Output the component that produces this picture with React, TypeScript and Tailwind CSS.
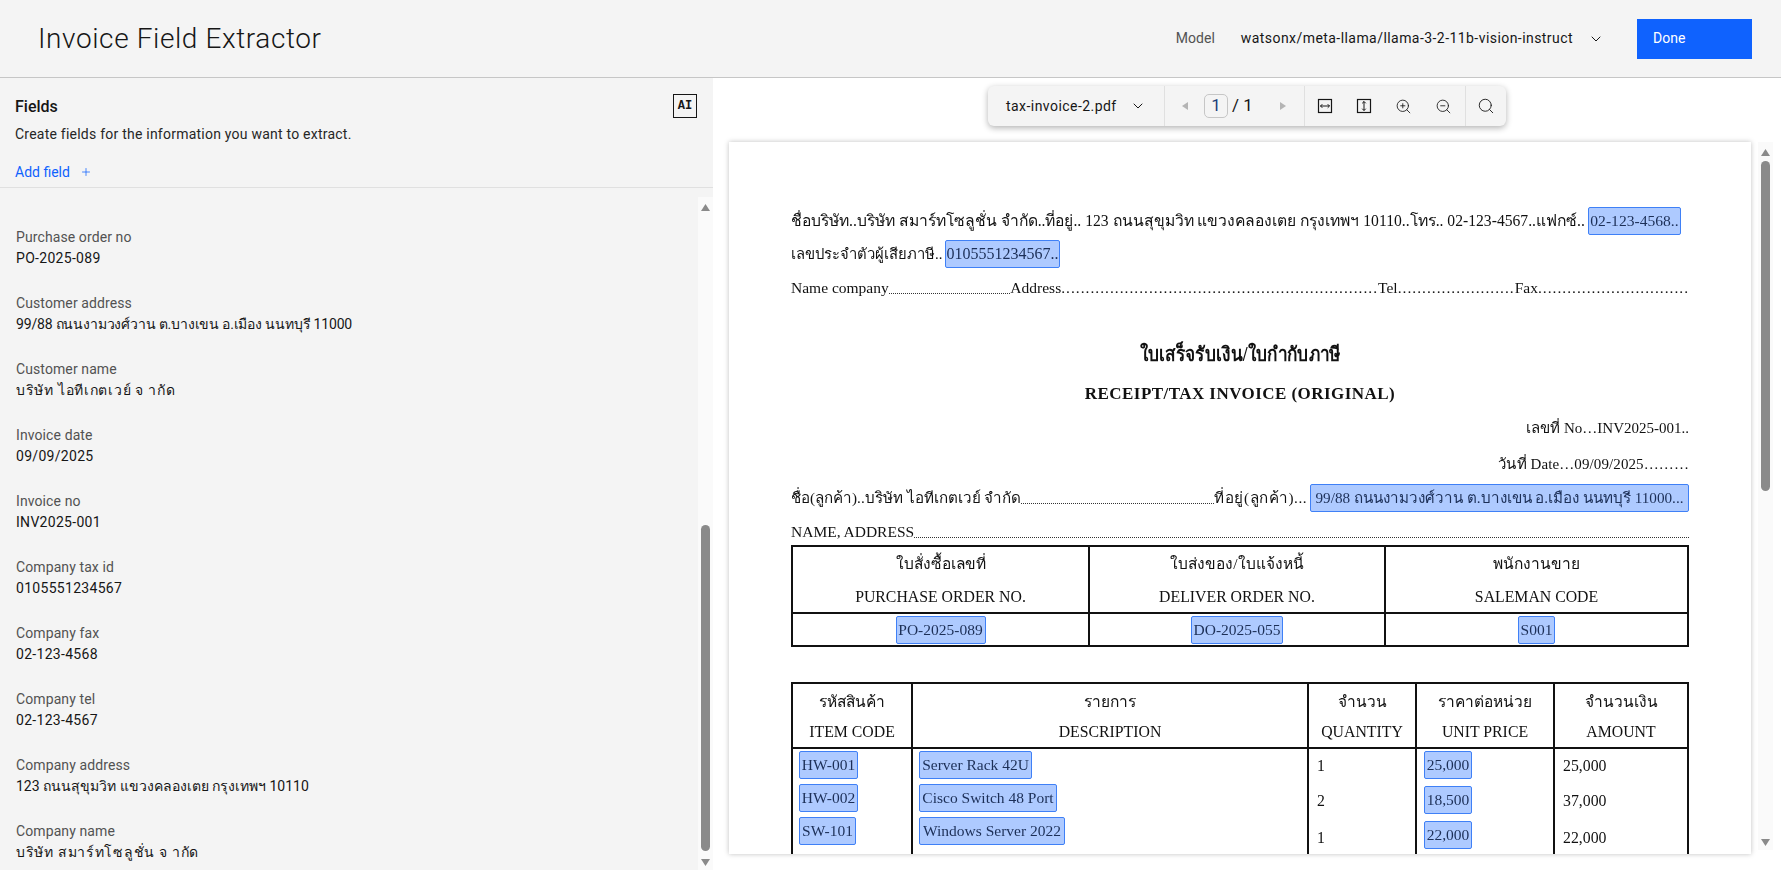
import React from "react";
import { ChevronDown, Plus, Search, ZoomIn, ZoomOut } from "lucide-react";

const fields = [
  { label: "Purchase order no", value: "PO-2025-089", spacing: "tracking-[0.3px]" },
  { label: "Customer address", value: "99/88 ถนนงามวงศ์วาน ต.บางเขน อ.เมือง นนทบุรี 11000", spacing: "tracking-[-0.18px]" },
  { label: "Customer name", value: "บริษัท ไอทีเกตเวย์ จ ากัด", spacing: "tracking-[0.7px]" },
  { label: "Invoice date", value: "09/09/2025", spacing: "tracking-[0.3px]" },
  { label: "Invoice no", value: "INV2025-001", spacing: "tracking-[0.3px]" },
  { label: "Company tax id", value: "0105551234567", spacing: "tracking-[0.3px]" },
  { label: "Company fax", value: "02-123-4568", spacing: "tracking-[0.3px]" },
  { label: "Company tel", value: "02-123-4567", spacing: "tracking-[0.3px]" },
  { label: "Company address", value: "123 ถนนสุขุมวิท แขวงคลองเตย กรุงเทพฯ 10110", spacing: "tracking-[0px]" },
  { label: "Company name", value: "บริษัท สมาร์ทโซลูชั่น จ ากัด", spacing: "tracking-[0.7px]" },
];

function Triangle({ dir, className }: { dir: "up" | "down" | "left" | "right"; className?: string }) {
  const points = {
    up: "5,1 10,9 0,9",
    down: "0,1 10,1 5,9",
    left: "8,1 8,9 2,5",
    right: "2,1 2,9 8,5",
  };
  return (
    <svg viewBox="0 0 10 10" className={className} fill="currentColor">
      <polygon points={points[dir]} />
    </svg>
  );
}

function Scrollbar({ before, thumb }: { before: string; thumb: string }) {
  return (
    <div className="flex h-full w-[15px] shrink-0 flex-col items-center bg-[#fafafa] text-[#8a8a8a]">
      <Triangle dir="up" className="mt-[6px] h-[9px] w-[9px] shrink-0" />
      <div className={before} />
      <div className={`w-[9px] shrink-0 rounded-full bg-[#8a8a8a] ${thumb}`} />
      <div className="flex-1" />
      <Triangle dir="down" className="mb-[3px] h-[9px] w-[9px] shrink-0" />
    </div>
  );
}

function Mark({ children, className }: { children: React.ReactNode; className?: string }) {
  return (
    <span
      className={`inline-flex h-[28px] items-center justify-center whitespace-nowrap rounded-[2px] border border-[#3f80f6] bg-[#aecaff] text-[#1c2f57] ${className ?? ""}`}
    >
      {children}
    </span>
  );
}

// coarse dot leaders of the scanned form
function Dots({ count }: { count: number }) {
  return <span className="whitespace-nowrap tracking-[1px]">{".".repeat(count)}</span>;
}

// very fine dot leaders
function FineDots() {
  return <span className="mb-[8px] min-w-0 flex-1 self-end border-b border-dotted border-[#333]" />;
}

function FitIcon({ vertical }: { vertical?: boolean }) {
  return (
    <svg viewBox="0 0 16 16" className="h-[16px] w-[16px]" fill="none" stroke="#161616">
      <rect x="1.5" y="1.5" width="13" height="13" strokeWidth="1.2" />
      {vertical ? (
        <path d="M8 3.5v9M6.2 5.3 8 3.5l1.8 1.8M6.2 10.7 8 12.5l1.8-1.8" strokeWidth="1" />
      ) : (
        <path d="M3.5 8h9M5.3 6.2 3.5 8l1.8 1.8M10.7 6.2 12.5 8l-1.8 1.8" strokeWidth="1" />
      )}
    </svg>
  );
}

function Toolbar() {
  return (
    <div className="flex h-[40px] w-[518px] items-stretch rounded-[6px] bg-[#f4f4f4] text-[14px] text-[#161616] shadow-[0_2px_6px_rgba(0,0,0,0.3)]">
      <div className="flex w-[177px] items-center justify-between border-r border-[#e0e0e0] pl-[18px] pr-[18px]">
        <span className="pt-[1px] tracking-[0.45px]">tax-invoice-2.pdf</span>
        <ChevronDown size={16} strokeWidth={1.5} />
      </div>
      <div className="flex w-[140px] items-center border-r border-[#e0e0e0] pl-[15px] text-[#b4b4b4]">
        <Triangle dir="left" className="h-[10px] w-[10px]" />
        <span className="ml-[14px] flex h-[24px] w-[24px] items-center justify-center rounded-[5px] border border-[#c6c6c6] text-[17px] text-[#1c3f7a]">
          1
        </span>
        <span className="ml-[4px] text-[17px] text-[#161616]">/ 1</span>
        <Triangle dir="right" className="ml-[25px] h-[10px] w-[10px]" />
      </div>
      <div className="flex w-[161px] items-center gap-[23px] border-r border-[#e0e0e0] pl-[12px] text-[#161616]">
        <FitIcon />
        <FitIcon vertical />
        <ZoomIn size={17} strokeWidth={1.2} />
        <ZoomOut size={17} strokeWidth={1.2} />
      </div>
      <div className="flex flex-1 items-center justify-center">
        <Search size={18} strokeWidth={1.2} />
      </div>
    </div>
  );
}

function InvoicePage() {
  return (
    <div className="h-full w-[1022px] overflow-hidden bg-white pl-[62px] pr-[62px] font-['Liberation_Serif','Noto_Sans',serif] text-[15px] text-[#111] shadow-[0_0_5px_rgba(0,0,0,0.25)] [&>*]:blur-[0.45px]">
      <div className="mt-[65px] flex h-[28px] items-center justify-between whitespace-nowrap pr-[8px] text-[15.65px]">
        <span>ชื่อบริษัท..บริษัท สมาร์ทโซลูชั่น จำกัด..ที่อยู่.. 123 ถนนสุขุมวิท แขวงคลองเตย กรุงเทพฯ 10110..โทร.. 02-123-4567..แฟกซ์..</span>
        <Mark className="w-[93px] text-[15.6px]">02-123-4568..</Mark>
      </div>
      <div className="mt-[5px] flex h-[28px] items-center whitespace-nowrap text-[14.8px]">
        <span className="w-[154px]">เลขประจำตัวผู้เสียภาษี..</span>
        <Mark className="w-[115px] text-[16px]">0105551234567..</Mark>
      </div>
      <div className="mt-[6px] flex h-[28px] items-center justify-between whitespace-nowrap text-[15.5px]">
        <span>Name company</span>
        <FineDots />
        <span>Address</span>
        <Dots count={65} />
        <span>Tel</span>
        <Dots count={24} />
        <span>Fax</span>
        <Dots count={31} />
      </div>
      <div className="mt-[38px] scale-x-[0.86] text-center text-[20px] font-bold leading-[28px]">ใบเสร็จรับเงิน/ใบกำกับภาษี</div>
      <div className="mt-[12px] text-center text-[17px] font-bold leading-[28px] tracking-[0.45px]">RECEIPT/TAX INVOICE (ORIGINAL)</div>
      <div className="mt-[6px] text-right leading-[28px]">เลขที่ No…INV2025-001..</div>
      <div className="mt-[8px] text-right leading-[28px] tracking-[0.1px]">วันที่ Date…09/09/2025………</div>
      <div className="mt-[6px] flex h-[28px] items-center whitespace-nowrap text-[15.2px]">
        <span>ชื่อ(ลูกค้า)..บริษัท ไอทีเกตเวย์ จำกัด</span>
        <FineDots />
        <span className="tracking-[0.5px]">ที่อยู่(ลูกค้า)...</span>
        <Mark className="ml-[3px] w-[379px] text-[15.2px]">99/88 ถนนงามวงศ์วาน ต.บางเขน อ.เมือง นนทบุรี 11000...</Mark>
      </div>
      <div className="mt-[6px] flex h-[28px] items-center whitespace-nowrap text-[15.5px]">
        <span>NAME, ADDRESS</span>
        <FineDots />
      </div>

      <div className="-mt-[1px] grid h-[102px] grid-cols-[297px_296px_1fr] grid-rows-[67px_1fr] border-2 border-[#111] text-center text-[15.8px]">
        {[
          ["ใบสั่งซื้อเลขที่", "PURCHASE ORDER NO."],
          ["ใบส่งของ/ใบแจ้งหนี้", "DELIVER ORDER NO."],
          ["พนักงานขาย", "SALEMAN CODE"],
        ].map(([th, en], i) => (
          <div key={en} className={`flex flex-col items-center justify-between border-b-2 border-[#111] pb-[3px] pt-[5px] ${i < 2 ? "border-r-2" : ""}`}>
            <span className="text-[15.5px]">{th}</span>
            <span>{en}</span>
          </div>
        ))}
        {[
          { v: "PO-2025-089", w: "w-[90px]" },
          { v: "DO-2025-055", w: "w-[92px]" },
          { v: "S001", w: "w-[37px]" },
        ].map(({ v, w }, i) => (
          <div key={v} className={`flex items-center justify-center border-[#111] ${i < 2 ? "border-r-2" : ""}`}>
            <Mark className={`${w} text-[15.5px]`}>{v}</Mark>
          </div>
        ))}
      </div>

      <div className="mt-[35px] grid grid-cols-[120px_396px_108px_138px_1fr] border-x-2 border-t-2 border-[#111] text-[15.8px]">
        {[
          ["รหัสสินค้า", "ITEM CODE"],
          ["รายการ", "DESCRIPTION"],
          ["จำนวน", "QUANTITY"],
          ["ราคาต่อหน่วย", "UNIT PRICE"],
          ["จำนวนเงิน", "AMOUNT"],
        ].map(([th, en], i) => (
          <div key={en} className={`flex h-[65px] flex-col items-center justify-between border-b-2 border-[#111] pb-[3px] pt-[6px] ${i < 4 ? "border-r-2" : ""}`}>
            <span className="text-[15.5px]">{th}</span>
            <span>{en}</span>
          </div>
        ))}
        <div className="flex h-[200px] flex-col gap-[5px] border-r-2 border-[#111] pl-[6px] pt-[2px] text-[15.5px]">
          <Mark className="w-[59px]">HW-001</Mark>
          <Mark className="w-[59px]">HW-002</Mark>
          <Mark className="w-[57px]">SW-101</Mark>
        </div>
        <div className="flex flex-col gap-[5px] border-r-2 border-[#111] pl-[6px] pt-[2px] text-[15.5px]">
          <Mark className="w-[113px]">Server Rack 42U</Mark>
          <Mark className="w-[138px]">Cisco Switch 48 Port</Mark>
          <Mark className="w-[146px]">Windows Server 2022</Mark>
        </div>
        <div className="flex flex-col border-r-2 border-[#111] pl-[8px] pt-[5px]">
          <span className="h-[35px]">1</span>
          <span className="h-[37px]">2</span>
          <span>1</span>
        </div>
        <div className="flex flex-col gap-[7px] border-r-2 border-[#111] pl-[7px] pt-[2px] text-[15.5px]">
          <Mark className="w-[48px]">25,000</Mark>
          <Mark className="w-[48px]">18,500</Mark>
          <Mark className="w-[48px]">22,000</Mark>
        </div>
        <div className="flex flex-col pl-[8px] pt-[5px]">
          <span className="h-[35px]">25,000</span>
          <span className="h-[37px]">37,000</span>
          <span>22,000</span>
        </div>
      </div>
    </div>
  );
}

export default function App() {
  return (
    <div className="flex h-[870px] w-[1781px] flex-col overflow-hidden bg-white font-['Roboto','Noto_Sans',sans-serif] text-[#161616]">
      <header className="flex h-[78px] shrink-0 items-center border-b border-[#c6c6c6] bg-[#f4f4f4] pl-[38px] pr-[29px]">
        <h1 className="flex-1 text-[28px] font-light tracking-[0.6px]">Invoice Field Extractor</h1>
        <span className="text-[14px] text-[#525252]">Model</span>
        <span className="ml-[26px] text-[14px] tracking-[0.44px]">watsonx/meta-llama/llama-3-2-11b-vision-instruct</span>
        <ChevronDown size={16} strokeWidth={1.5} className="ml-[15px]" />
        <button className="ml-[33px] flex h-[40px] w-[115px] items-center bg-[#0f62fe] pl-[16px] text-[14px] text-white">Done</button>
      </header>

      <div className="flex min-h-0 flex-1">
        <aside className="flex w-[713px] shrink-0 flex-col bg-[#f4f4f4]">
          <div className="h-[110px] shrink-0 border-b border-[#e0e0e0] pl-[15px] pr-[16px]">
            <div className="flex items-start justify-between pt-[16px]">
              <h2 className="mt-[2px] text-[16px] font-medium leading-[22px]">Fields</h2>
              <span className="flex h-[24px] w-[24px] items-center justify-center border-[1.5px] border-[#161616] font-['Liberation_Mono',monospace] text-[12px] font-bold">
                AI
              </span>
            </div>
            <p className="mt-[7px] text-[14px] leading-[18px] tracking-[0.23px] text-[#262626]">Create fields for the information you want to extract.</p>
            <div className="mt-[20px] flex items-center gap-[10px] text-[14px] leading-[18px] text-[#0f62fe]">
              <span>Add field</span>
              <Plus size={12} strokeWidth={1.5} />
            </div>
          </div>
          <div className="flex min-h-0 flex-1 pt-[9px]">
            <div className="min-w-0 flex-1 overflow-hidden pl-[16px] pt-[30px]">
              {fields.map((f) => (
                <div key={f.label} className="h-[66px]">
                  <div className="text-[14px] leading-[20px] tracking-[0.1px] text-[#525252]">{f.label}</div>
                  <div className={`mt-[1px] text-[14px] leading-[20px] ${f.spacing}`}>{f.value}</div>
                </div>
              ))}
            </div>
            <Scrollbar before="h-[313px] shrink-0" thumb="h-[326px]" />
          </div>
        </aside>

        <main className="flex min-w-0 flex-1 flex-col items-center bg-white">
          <div className="flex h-[64px] w-full shrink-0 justify-start pl-[275px] pt-[8px]">
            <Toolbar />
          </div>
          <div className="flex min-h-0 w-full flex-1 pb-[16px] pl-[16px]">
            <InvoicePage />
            <div className="ml-[7px] h-[708px] flex-1">
              <Scrollbar before="h-[4px] shrink-0" thumb="h-[330px]" />
            </div>
          </div>
        </main>
      </div>
    </div>
  );
}
